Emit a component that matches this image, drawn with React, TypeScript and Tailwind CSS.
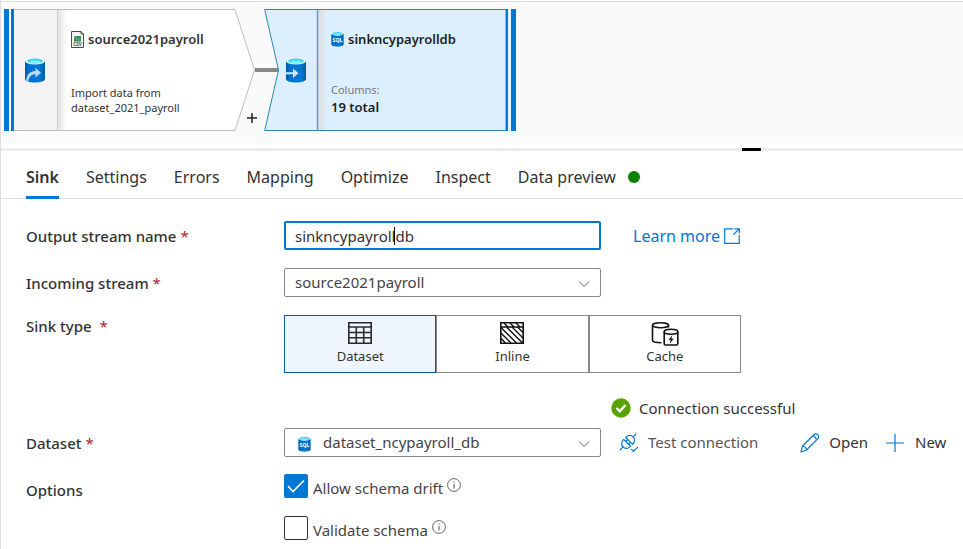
import { useState } from "react";
import type { ReactNode } from "react";

type DbProps = { kind: "sql" | "source" | "sink"; className: string };

function DatabaseIcon({ kind, className }: DbProps) {
  return (
    <svg viewBox="0 0 20 26" className={className} aria-hidden="true">
      <defs>
        <linearGradient id={"body-" + kind} x1="0" x2="1">
          <stop offset="0" stopColor="#005ba1" />
          <stop offset="0.2" stopColor="#0072cf" />
          <stop offset="0.75" stopColor="#0078d4" />
          <stop offset="1" stopColor="#005ba1" />
        </linearGradient>
      </defs>
      <path d="M0 4v18c0 2 4.500 3.500 10 3.500s10-1.500 10-3.500V4z" fill={"url(#body-" + kind + ")"} />
      <ellipse cx="10" cy="4" rx="10" ry="3.600" fill="#e8f6fc" />
      <ellipse cx="10" cy="4" rx="7.800" ry="2.500" fill="#32d4f5" />
      <ellipse cx="10" cy="4.900" rx="5.500" ry="1.400" fill="#8ceefc" />
      {kind === "source" && (
        <path d="M1.200 23.500C1.500 17.500 5.500 14.300 10.500 14V11L16 15.800L10.500 20.500V17.200C6.500 17.200 4 19.500 3.200 24.200z" fill="#c3dcf5" />
      )}
      {kind === "sink" && <path d="M0 15.200h7v-3.700l5.500 4.700-5.500 4.700v-3.700H0z" fill="#d3e6f8" />}
      {kind === "sql" && (
        <text x="10" y="18" textAnchor="middle" fontSize="8.500" fontWeight="700" fontFamily="Noto Sans, sans-serif" fill="#ffffff">
          SQL
        </text>
      )}
    </svg>
  );
}

function CsvIcon() {
  return (
    <svg viewBox="0 0 13 17" className="h-[17px] w-[13px] shrink-0" aria-hidden="true">
      <path d="M.5.5h9.500l2.500 2.500v13.500H.5z" fill="#f4f4f4" stroke="#4a4a4a" />
      <path d="M10 .5V3h2.500" fill="none" stroke="#4a4a4a" />
      <path d="M4 5h6v5.500H3v-3.500z" fill="#2a8a4a" />
      <path d="M5.500 5v5.500M7.700 5v5.500M3 8h7" stroke="#7cc796" strokeWidth=".5" />
      <text x="6.500" y="15" textAnchor="middle" fontSize="4.500" fontWeight="700" fontFamily="Noto Sans, sans-serif" fill="#444">
        CSV
      </text>
    </svg>
  );
}

function TableIcon() {
  return (
    <svg viewBox="0 0 24 22" className="h-[22px] w-6" fill="none" stroke="#2b2b2b" strokeWidth="1.600" aria-hidden="true">
      <path d="M.8.8h22.400v20.400H.8zM.8 5h22.400M.8 10.500h22.400M.8 15.800h22.400M8.300 5v16.200M15.700 5v16.200" />
    </svg>
  );
}

function InlineIcon() {
  return (
    <svg viewBox="0 0 24 22" className="h-[22px] w-6" fill="none" stroke="#111" strokeWidth="1.600" aria-hidden="true">
      <path d="M.8.8h22.400v20.400H.8zM.8 5h22.400" />
      <path d="M4 1l4 4M10 1l4 4M16 1l4 4M1 5.500l15.500 15.500M1 11l10 10M1 16.500l4.500 4.500M6.500 5l16 16M12 5l11 11M17.500 5l5.500 5.500" strokeWidth="1.400" />
    </svg>
  );
}

function CacheIcon() {
  return (
    <svg viewBox="0 0 28 24" className="h-6 w-7" fill="none" stroke="#111" strokeWidth="1.600" aria-hidden="true">
      <ellipse cx="9.500" cy="3.300" rx="8" ry="2.500" />
      <path d="M1.500 3.300v15.200c0 1.300 3.500 2.200 9 2.300M17.500 3.300v2.200" />
      <ellipse cx="20" cy="9.700" rx="6.800" ry="2.500" />
      <path d="M13.200 9.700v12c0 .8.500 1.300 1.300 1.300h11c.8 0 1.300-.5 1.300-1.300v-12" />
      <path d="M21.300 13.200l-3.800 4.600h2.200l-1 4 4-5h-2.300z" fill="#111" stroke="none" />
    </svg>
  );
}

function PlugIcon() {
  return (
    <svg viewBox="0 0 20 20" className="size-5" fill="none" stroke="#0078d4" strokeWidth="1.200" strokeLinecap="round" strokeLinejoin="round" aria-hidden="true">
      <g transform="translate(9 9) rotate(-45)">
        <path d="M-1.200-4.800h-1a4.800 4.800 0 0 0 0 9.600h1zM1.500-4.800h1a4.800 4.800 0 0 1 0 9.600h-1z" />
        <path d="M-7 0h-4M7.300 0h4M-1.200-2h2.700M-1.200 2h2.700" />
      </g>
      <path d="M12.500 16.300l2 2 4-4" />
    </svg>
  );
}

function PencilIcon() {
  return (
    <svg viewBox="0 0 20 20" className="size-5" fill="none" stroke="#0078d4" strokeWidth="1.200" strokeLinejoin="round" aria-hidden="true">
      <path d="M1 19l1.500-6L14 1.800c1.200-1.200 2.700-1 3.800 0s1.200 2.600 0 3.800L6.500 17z" />
      <path d="M2.500 13c2 .3 3.700 1.800 4 4M12.700 3c1.800.3 3.200 1.700 3.600 3.700" />
    </svg>
  );
}

function InfoIcon() {
  return (
    <svg viewBox="0 0 14 14" className="mb-0.5 size-[14px]" fill="none" stroke="#555" aria-hidden="true">
      <circle cx="7" cy="7" r="6.400" strokeWidth=".9" />
      <path d="M7 6v4.500M7 3.500v1.200" />
    </svg>
  );
}

function Chevron() {
  return (
    <svg viewBox="0 0 12 8" className="pointer-events-none absolute top-3 right-[11px] h-2 w-3" fill="none" stroke="#605e5c" aria-hidden="true">
      <path d="M1 1.500l5 5 5-5" />
    </svg>
  );
}

function Canvas() {
  return (
    <section className="flex items-start border-t border-[#dcdcdc] bg-[#fafafa] pt-[7px] pb-3 pl-[3px]">
      <div className="relative flex h-[122px] w-[251px] shrink-0">
        <svg viewBox="0 0 251 122" className="absolute inset-0 size-full" aria-hidden="true">
          <defs>
            <linearGradient id="fold" x1="0" x2="1">
              <stop offset="0" stopColor="#dedede" />
              <stop offset="1" stopColor="#dedede" stopOpacity="0" />
            </linearGradient>
          </defs>
          <path d="M10 .5H231L250.500 61L231 121.500H10z" fill="#fff" stroke="#bdbdbd" />
          <path d="M10 1h43v120H10z" fill="#f3f3f3" />
          <path d="M53 1h10v120H53z" fill="url(#fold)" />
          <path d="M53.500 1v120" stroke="#d0d0d0" />
          <path d="M0 0h5v122H0zM7 0h3v122H7z" fill="#0078d4" />
          <path d="M5 0h2v122H5z" fill="#fff" />
        </svg>
        <div className="relative flex w-[53px] items-center justify-center pl-[9px]">
          <DatabaseIcon kind="source" className="h-[26px] w-5" />
        </div>
        <div className="relative flex flex-col pt-[21px] pl-[14px]">
          <h2 className="flex items-center gap-1 text-[13px] leading-[18px] font-semibold text-[#333]">
            <CsvIcon />
            source2021payroll
          </h2>
          <p className="mt-[37px] flex flex-col text-[11px] leading-[15px] text-[#333]">
            <span>Import data from</span>
            <span>dataset_2021_payroll</span>
          </p>
        </div>
      </div>
      <div className="relative h-[122px] w-[9px] shrink-0">
        <span className="absolute top-[59px] left-0 h-1 w-6 bg-[#8a8886]" />
        <button type="button" aria-label="Add transformation" className="absolute top-[104px] -left-2 size-[10px] text-[#222]">
          <svg viewBox="0 0 10 10" className="size-full" stroke="currentColor" strokeWidth="1.500" aria-hidden="true">
            <path d="M5 0v10M0 5h10" />
          </svg>
        </button>
      </div>
      <div className="relative flex h-[122px] w-[252px] shrink-0">
        <svg viewBox="0 0 252 122" className="absolute inset-0 size-full" aria-hidden="true">
          <path d="M.7 .5H242V121.500H.7L14.500 61z" fill="#dceffe" stroke="#2b88a8" />
          <path d="M54 1h9v120H54z" fill="url(#fold)" />
          <path d="M53.500 0v122" stroke="#5a9fb8" strokeWidth="1.500" />
          <path d="M242 0h2v122h-2zM247 0h5v122h-5z" fill="#0078d4" />
          <path d="M244 0h3v122h-3z" fill="#e6f3ff" />
        </svg>
        <div className="relative flex w-[53px] items-center justify-center pl-[10px]">
          <DatabaseIcon kind="sink" className="h-[26px] w-5" />
        </div>
        <div className="relative flex flex-col pt-[21px] pl-[14px]">
          <h2 className="flex items-center gap-1 text-[13px] leading-[18px] font-semibold text-[#222]">
            <DatabaseIcon kind="sql" className="h-4 w-[13px]" />
            sinkncypayrolldb
          </h2>
          <p className="mt-[34px] text-[11px] leading-4 text-[#777]">Columns:</p>
          <p className="text-[13px] leading-[18px] font-semibold text-[#222]">19 total</p>
        </div>
      </div>
    </section>
  );
}

const tabs = ["Sink", "Settings", "Errors", "Mapping", "Optimize", "Inspect", "Data preview"];

function Tabs() {
  const [active, setActive] = useState("Sink");
  return (
    <div role="tablist" className="flex h-12 items-stretch gap-[27px] border-b border-[#dcdcdc] pl-[25px]">
      {tabs.map((tab) => (
        <button
          key={tab}
          type="button"
          role="tab"
          aria-selected={tab === active}
          onClick={() => setActive(tab)}
          className={
            tab === active
              ? "-mb-px flex items-center border-b-[3px] border-[#0078d4] pt-1.5 text-base font-semibold whitespace-nowrap text-[#333]"
              : "-mb-px flex items-center gap-3 border-b-[3px] border-transparent pt-1.5 text-base whitespace-nowrap text-[#333]"
          }
        >
          {tab}
          {tab === "Data preview" && <span className="size-3 rounded-full bg-[#0b8000]" />}
        </button>
      ))}
    </div>
  );
}

type RowProps = { label: string; htmlFor?: string; required?: boolean; top?: boolean; children: ReactNode };

function Row({ label, htmlFor, required, top, children }: RowProps) {
  return (
    <div className={top ? "flex items-start" : "flex items-center"}>
      <label htmlFor={htmlFor} className="w-[258px] shrink-0 text-[15px] leading-[22px] font-medium text-[#333]">
        {label}
        {required && <span className={top ? "ml-2 font-normal text-[#a4262c]" : "ml-1 font-normal text-[#a4262c]"}>*</span>}
      </label>
      {children}
    </div>
  );
}

const sinkTypes = [
  { name: "Dataset", icon: <TableIcon /> },
  { name: "Inline", icon: <InlineIcon /> },
  { name: "Cache", icon: <CacheIcon /> },
];

function Option({ id, label, checked }: { id: string; label: string; checked: boolean }) {
  return (
    <div className="flex items-center">
      <span className="relative flex">
        <input
          id={id}
          type="checkbox"
          defaultChecked={checked}
          className="peer size-6 appearance-none rounded-xs border border-[#333] bg-white checked:border-[#0078d4] checked:bg-[#0078d4]"
        />
        <svg viewBox="0 0 24 24" className="pointer-events-none absolute inset-0 hidden size-6 peer-checked:block" fill="none" stroke="#fff" strokeWidth="1.600" aria-hidden="true">
          <path d="M4 12l5 5.500L20 6.500" />
        </svg>
      </span>
      <label htmlFor={id} className="mt-1 mr-1 ml-[5px] text-[15px] leading-5 text-[#444]">
        {label}
      </label>
      <InfoIcon />
    </div>
  );
}

export default function App() {
  const [type, setType] = useState("Dataset");
  return (
    <main className="min-h-screen border-l border-[#dcdcdc] bg-white pt-px font-['Noto_Sans',sans-serif]">
      <Canvas />
      <div className="mt-[5px] h-[3px] bg-[#ececec] pl-[741px]">
        <div className="h-full w-[19px] bg-black" />
      </div>
      <Tabs />
      <form className="flex flex-col pt-[22px] pl-[25px]" onSubmit={(e) => e.preventDefault()}>
        <Row label="Output stream name" htmlFor="stream" required>
          <div className="relative w-[317px]">
            <input
              id="stream"
              type="text"
              defaultValue="sinkncypayrolldb"
              className="block h-[29px] w-full rounded-xs border-2 border-[#0078d4] px-[9px] text-[15px] text-[#333] outline-none"
            />
            <span className="absolute top-1.5 left-[110px] h-[18px] w-px bg-black" />
          </div>
          <a href="#learn" className="ml-8 flex items-center gap-1 text-base leading-6 text-[#0078d4]">
            Learn more
            <svg viewBox="0 0 16 16" className="size-4" fill="none" stroke="currentColor" strokeWidth="1.200" aria-hidden="true">
              <path d="M9 .8H.7v14.500h14.500V7M10.500.8h4.800v4.800M15.200.8L9.500 6.500" />
            </svg>
          </a>
        </Row>
        <div className="mt-[18px]">
          <Row label="Incoming stream" htmlFor="incoming" required>
            <div className="relative w-[317px]">
              <select id="incoming" className="block h-[29px] w-full appearance-none rounded-xs border border-[#8a8886] bg-white px-[10px] text-[15px] text-[#444]">
                <option>source2021payroll</option>
              </select>
              <Chevron />
            </div>
          </Row>
        </div>
        <div className="mt-[18px]">
          <Row label="Sink type" required top>
            <div className="grid w-[457px] grid-cols-3">
              {sinkTypes.map((t) => (
                <button
                  key={t.name}
                  type="button"
                  aria-pressed={t.name === type}
                  onClick={() => setType(t.name)}
                  className={
                    t.name === type
                      ? "flex h-[58px] flex-col items-center border border-[#005a9e] bg-[#eff6ff] pt-1.5 text-[13px] text-[#333]"
                      : "flex h-[58px] flex-col items-center border border-[#8a8886] bg-white pt-1.5 text-[13px] text-[#333]"
                  }
                >
                  <span className="flex h-6 items-start">{t.icon}</span>
                  <span className="leading-5">{t.name}</span>
                </button>
              ))}
            </div>
          </Row>
        </div>
        <p className="mt-6 flex h-[22px] items-center gap-2 pl-[585px] text-[15px] text-[#333]">
          <svg viewBox="0 0 20 20" className="size-5 shrink-0" aria-hidden="true">
            <circle cx="10" cy="10" r="9.700" fill="#57a300" />
            <path d="M5.500 10l3.200 3.200L14.500 7" fill="none" stroke="#fff" strokeWidth="2.400" />
          </svg>
          Connection successful
        </p>
        <div className="mt-[9px]">
          <Row label="Dataset" htmlFor="dataset" required>
            <div className="relative w-[317px] shrink-0">
              <select id="dataset" className="block h-[29px] w-full appearance-none rounded-xs border border-[#8a8886] bg-white pr-8 pl-[38px] text-[15px] text-[#444]">
                <option>dataset_ncypayroll_db</option>
              </select>
              <DatabaseIcon kind="sql" className="pointer-events-none absolute top-2 left-[14px] h-4 w-[13px]" />
              <Chevron />
            </div>
            <div className="ml-[18px] flex items-center text-[15px] whitespace-nowrap text-[#333]">
              <button type="button" className="mr-[42px] flex items-center gap-[9px] text-[#555]">
                <PlugIcon />
                Test connection
              </button>
              <button type="button" className="mr-[18px] flex items-center gap-[9px]">
                <PencilIcon />
                Open
              </button>
              <button type="button" className="flex items-center gap-[11px]">
                <svg viewBox="0 0 18 18" className="size-[18px]" stroke="#0078d4" strokeWidth="1.200" aria-hidden="true">
                  <path d="M9 0v18M0 9h18" />
                </svg>
                New
              </button>
            </div>
          </Row>
        </div>
        <fieldset className="mt-[17px] flex items-start">
          <legend className="float-left mt-1 w-[258px] shrink-0 text-[15px] leading-6 font-medium text-[#333]">Options</legend>
          <div className="flex flex-col gap-[18px]">
            <Option id="drift" label="Allow schema drift" checked />
            <Option id="validate" label="Validate schema" checked={false} />
          </div>
        </fieldset>
      </form>
    </main>
  );
}
